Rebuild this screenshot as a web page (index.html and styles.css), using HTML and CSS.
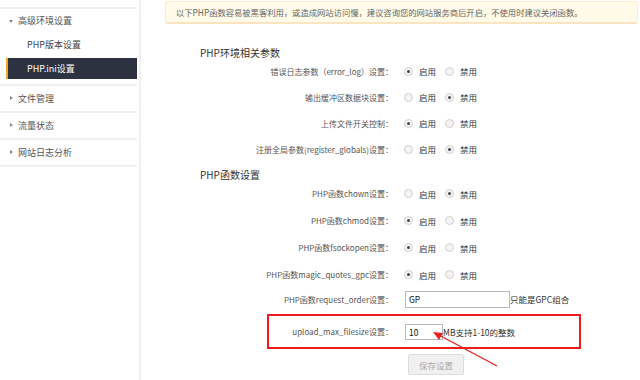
FILE: index.html
```html
<!DOCTYPE html>
<html lang="zh-CN">
<head>
    <meta charset="UTF-8">
    <title>PHP.ini设置</title>
    <link rel="stylesheet" href="styles.css">
</head>
<body>
    <!-- Sidebar -->
    <div class="side">
        <div class="sep"></div>
        <div class="group-title"><span class="tri-down"></span>高级环境设置</div>
        <div class="sub-item">PHP版本设置</div>
        <div class="sub-item active">PHP.ini设置</div>
        <div class="sep gap"></div>
        <div class="group-title closed"><span class="tri-right"></span>文件管理</div>
        <div class="sep"></div>
        <div class="group-title closed"><span class="tri-right"></span>流量状态</div>
        <div class="sep"></div>
        <div class="group-title closed"><span class="tri-right"></span>网站日志分析</div>
        <div class="sep"></div>
    </div>

    <div class="main">
        <div class="notice">以下PHP函数容易被黑客利用，或造成网站访问慢，建议咨询您的网站服务商后开启，不使用时建议关闭函数。</div>

        <div class="form">
            <h3 class="sec-title">PHP环境相关参数</h3>
            <div class="row">
                <label>错误日志参数（error_log）设置：</label>
                <span class="radio on"></span><span class="opt">启用</span>
                <span class="radio"></span><span class="opt">禁用</span>
            </div>
            <div class="row">
                <label>输出缓冲区数据块设置：</label>
                <span class="radio"></span><span class="opt">启用</span>
                <span class="radio on"></span><span class="opt">禁用</span>
            </div>
            <div class="row">
                <label>上传文件开关控制：</label>
                <span class="radio on"></span><span class="opt">启用</span>
                <span class="radio"></span><span class="opt">禁用</span>
            </div>
            <div class="row">
                <label>注册全局参数(register_globals)设置：</label>
                <span class="radio"></span><span class="opt">启用</span>
                <span class="radio on"></span><span class="opt">禁用</span>
            </div>

            <h3 class="sec-title second">PHP函数设置</h3>
            <div class="funcs">
                <div class="row">
                    <label>PHP函数chown设置：</label>
                    <span class="radio"></span><span class="opt">启用</span>
                    <span class="radio on"></span><span class="opt">禁用</span>
                </div>
                <div class="row">
                    <label>PHP函数chmod设置：</label>
                    <span class="radio on"></span><span class="opt">启用</span>
                    <span class="radio"></span><span class="opt">禁用</span>
                </div>
                <div class="row">
                    <label>PHP函数fsockopen设置：</label>
                    <span class="radio on"></span><span class="opt">启用</span>
                    <span class="radio"></span><span class="opt">禁用</span>
                </div>
                <div class="row">
                    <label>PHP函数magic_quotes_gpc设置：</label>
                    <span class="radio on"></span><span class="opt">启用</span>
                    <span class="radio"></span><span class="opt">禁用</span>
                </div>
                <div class="row short-row">
                    <label>PHP函数request_order设置：</label>
                    <input type="text" class="txt wide" value="GP"><span class="hint">只能是GPC组合</span>
                </div>
            </div>
            <div class="row mark">
                <label>upload_max_filesize设置：</label>
                <input type="text" class="txt short" value="10"><span class="hint">MB支持1-10的整数</span>
            </div>
            <div class="actions">
                <button type="button" class="btn">保存设置</button>
            </div>
        </div>

        <!-- red annotation arrow -->
        <svg class="arrow" width="70" height="40" viewBox="0 0 70 40">
            <line x1="66" y1="36" x2="6" y2="4" stroke="#e8231e" stroke-width="1.3"/>
            <polygon points="2,2 12,3 8,10" fill="#e8231e"/>
        </svg>
    </div>
</body>
</html>
```

FILE: styles.css
```css
body {
    margin: 0;
    font-family: "Noto Sans CJK SC", "Noto Sans", sans-serif;
    background: #fff;
    display: flex;
    height: 380px;
    overflow: hidden;
}

/* Sidebar */
.side {
    width: 137px;
    padding-top: 7px;
    margin-right: 2px;
    font-size: 9px;
    color: #555;
}

.sep {
    height: 2px;
    background: #f0f0f0;
}

.sep.gap {
    margin-top: 5px;
}

.group-title {
    height: 24px;
    line-height: 24px;
    padding-left: 18px;
    position: relative;
}

.group-title.closed {
    height: 25px;
    line-height: 25px;
}

.tri-down {
    position: absolute;
    left: 9px;
    top: 11px;
    border-left: 2.5px solid transparent;
    border-right: 2.5px solid transparent;
    border-top: 3px solid #888;
}

.tri-right {
    position: absolute;
    left: 10px;
    top: 10px;
    border-top: 2.5px solid transparent;
    border-bottom: 2.5px solid transparent;
    border-left: 3px solid #888;
}

.sub-item {
    height: 23px;
    line-height: 23px;
    padding-left: 27px;
    color: #444;
}

.sub-item.active {
    margin-top: 2px;
    margin-left: 6px;
    padding-left: 19px;
    height: 21px;
    line-height: 21px;
    background: #2d3240;
    border-left: 2px solid #f5a623;
    color: #fff;
}

/* Main */
.main {
    flex: 1;
    border-left: 2px solid #f0f0f0;
    padding-top: 1px;
    position: relative;
}

.notice {
    margin: 0 2px 0 24px;
    height: 20px;
    line-height: 20px;
    padding-left: 10px;
    font-size: 8.3px;
    color: #666;
    background: #fffbe8;
    border: 1px solid #fbeccf;
    border-bottom: 2px solid #fae4c2;
    border-radius: 3px;
}

.form {
    margin-left: 57px;
    font-size: 8px;
    color: #555;
}

.sec-title {
    margin: 24px 0 0 2px;
    height: 10px;
    line-height: 10px;
    font-size: 10px;
    font-weight: normal;
    color: #333;
}

.sec-title.second {
    margin-top: 8px;
}

.row {
    display: flex;
    align-items: center;
    height: 26px;
}

.funcs .row {
    height: 27px;
}

.funcs .row.short-row {
    height: 22px;
}

.row label {
    width: 195px;
    text-align: right;
    flex-shrink: 0;
}

.radio {
    width: 7px;
    height: 7px;
    margin-left: 11px;
    border: 1px solid #cfcfcf;
    border-radius: 50%;
    background: #f4f4f4;
    position: relative;
}

.radio + .opt + .radio {
    margin-left: 9px;
}

.radio.on::after {
    content: "";
    position: absolute;
    left: 2px;
    top: 2px;
    width: 3px;
    height: 3px;
    border-radius: 50%;
    background: #444;
}

.opt {
    margin-left: 6px;
    color: #333;
    font-size: 8.5px;
}

.txt {
    margin: 0 0 0 12px;
    padding: 0 3px;
    border: 1px solid #b9b9b9;
    font-family: inherit;
    font-size: 8.5px;
    color: #111;
    box-sizing: border-box;
}

.txt.wide {
    width: 105px;
    height: 17px;
}

.txt.short {
    width: 38px;
    height: 16px;
}

.hint {
    color: #333;
    font-size: 8.5px;
}

.row.mark {
    margin: 4px 0 0 69px;
    width: 314px;
    height: 35px;
    border: 2px solid #f01c1c;
    box-sizing: border-box;
}

.row.mark label {
    width: 124px;
}

.actions {
    padding: 5px 0 0 210px;
}

.btn {
    width: 56px;
    height: 21px;
    padding: 0;
    font-family: inherit;
    font-size: 8.5px;
    color: #aaa;
    background: #f0f0f0;
    border: 1px solid #ddd;
    border-radius: 2px;
}

.arrow {
    position: absolute;
    left: 290px;
    top: 330px;
}
```
